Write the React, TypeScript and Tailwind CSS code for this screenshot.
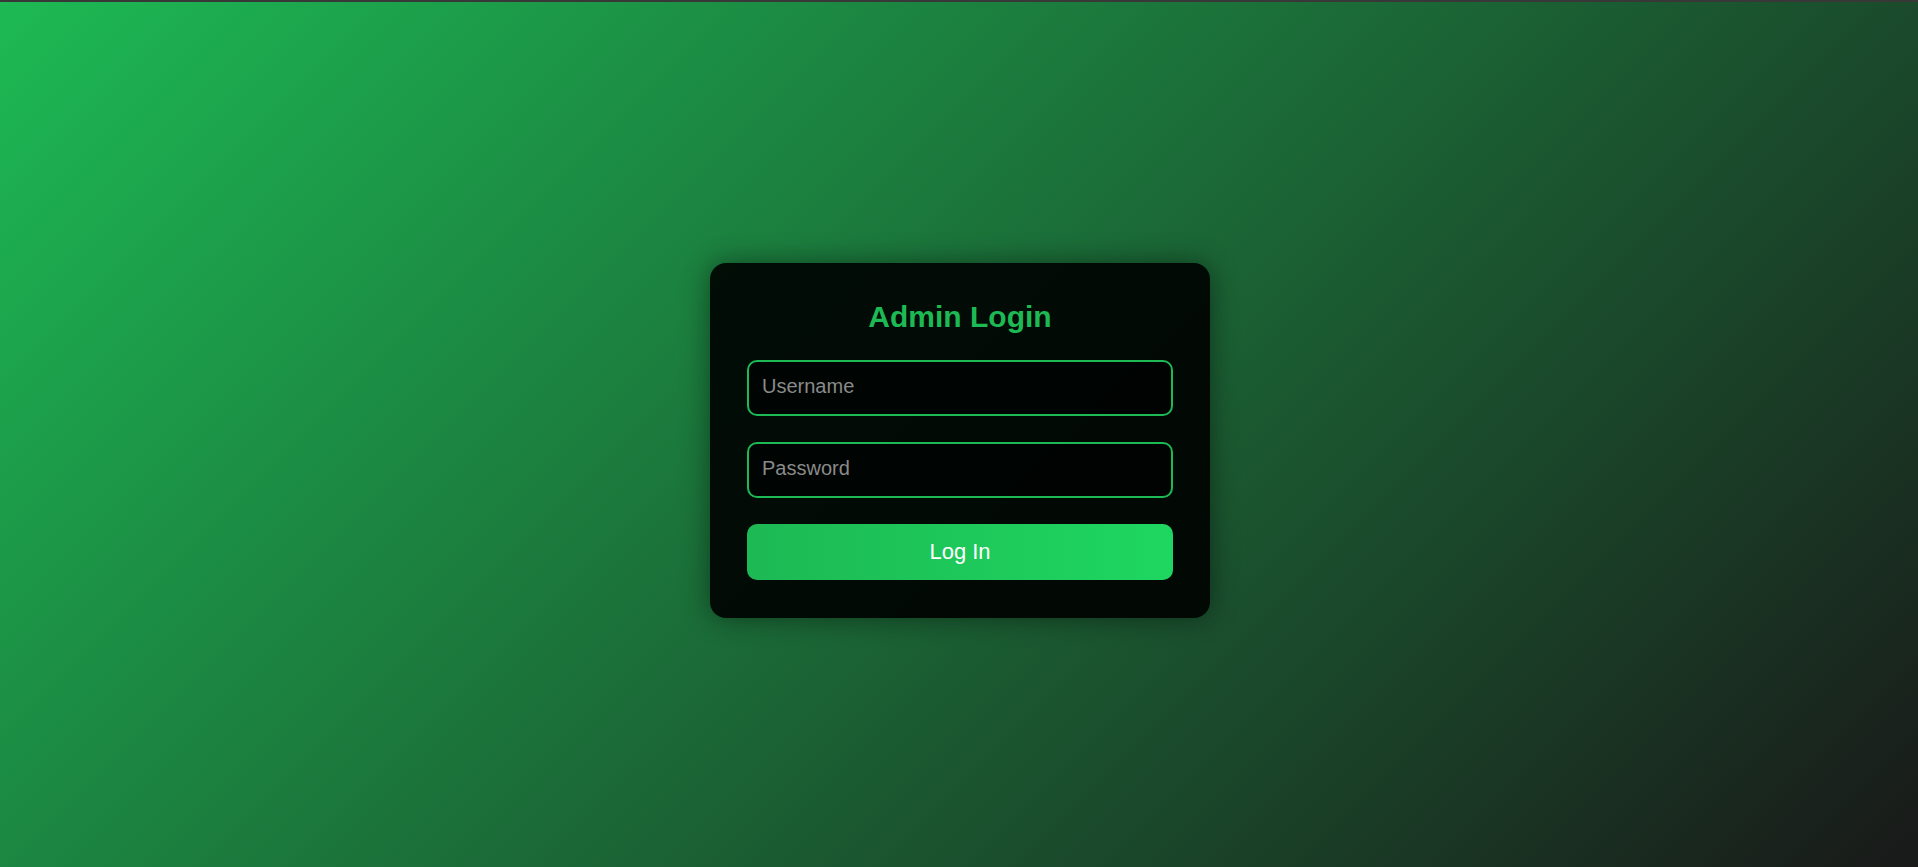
export default function App() {
  return (
    <div
      className="min-h-screen w-full flex items-center justify-center pt-[12px] border-t-2 border-[#383838] bg-[linear-gradient(135deg,#1db954,#191919)]"
      style={{ fontFamily: '"Liberation Sans", Arial, sans-serif' }}
    >
      {/* Card */}
      <div className="w-[500px] ml-[2px] rounded-2xl bg-black/90 px-[37px] pt-[36px] pb-[38px] shadow-[0_0_28px_rgba(0,0,0,0.45)]">
        <h2 className="text-center text-[30px] leading-[36px] font-bold text-[#1db954] mb-[25px]">
          Admin Login
        </h2>
        <form className="flex flex-col gap-[26px]" onSubmit={(e) => e.preventDefault()}>
          <input
            type="text"
            placeholder="Username"
            className="h-[56px] w-full rounded-[10px] border-2 border-[#1db954] bg-black/60 px-[13px] pb-[4px] text-[20px] text-white placeholder:text-[#8a8a8a] outline-none"
          />
          <input
            type="password"
            placeholder="Password"
            className="h-[56px] w-full rounded-[10px] border-2 border-[#1db954] bg-black/60 px-[13px] pb-[4px] text-[20px] text-white placeholder:text-[#8a8a8a] outline-none"
          />
          <button
            type="submit"
            className="h-[56px] w-full rounded-[10px] bg-[linear-gradient(90deg,#1db954,#1ed760)] pb-[2px] text-[22px] text-white"
          >
            Log In
          </button>
        </form>
      </div>
    </div>
  );
}
